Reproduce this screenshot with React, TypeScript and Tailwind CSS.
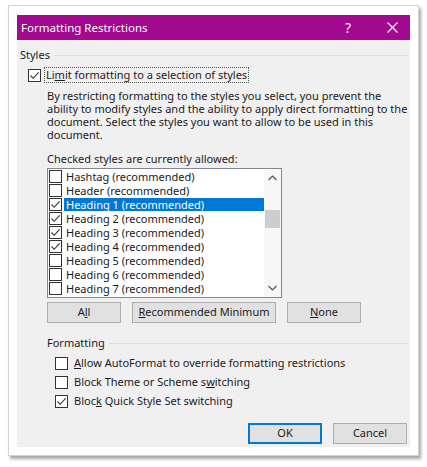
import React from "react";

const STYLES = [
  { name: "Hashtag (recommended)", checked: false },
  { name: "Header (recommended)", checked: false },
  { name: "Heading 1 (recommended)", checked: true, selected: true },
  { name: "Heading 2 (recommended)", checked: true },
  { name: "Heading 3 (recommended)", checked: true },
  { name: "Heading 4 (recommended)", checked: true },
  { name: "Heading 5 (recommended)", checked: false },
  { name: "Heading 6 (recommended)", checked: false },
  { name: "Heading 7 (recommended)", checked: false },
];

function Check({ checked, size = 13 }: { checked: boolean; size?: number }) {
  return (
    <span
      className="inline-flex shrink-0 items-center justify-center border border-[#333] bg-white"
      style={{ width: size, height: size }}
    >
      {checked && (
        <svg width={size - 2} height={size - 2} viewBox="0 0 11 11" fill="none">
          <path d="M1.5 5.5 L4.2 8.3 L9.6 2.4" stroke="#333" strokeWidth="1.1" />
        </svg>
      )}
    </span>
  );
}

function Btn({ children, primary, className = "" }: { children: React.ReactNode; primary?: boolean; className?: string }) {
  return (
    <button
      className={`flex h-[21px] items-center justify-center bg-[#e1e1e1] text-[#1b1b1b] ${
        primary ? "border-2 border-[#0078d7]" : "border border-[#adadad]"
      } ${className}`}
    >
      {children}
    </button>
  );
}

export default function App() {
  return (
    <div className="min-h-screen bg-white pt-[5px] pl-[8px] text-[11px] text-[#1b1b1b]" style={{ fontFamily: '"Noto Sans", "Open Sans", sans-serif' }}>
      <div className="w-[411px] border border-[#d2d2d2] bg-white px-[8px] pt-[9px] pb-[8px] shadow-[2px_3px_3px_rgba(0,0,0,0.35)]">
        {/* title bar */}
        <div className="flex h-[25px] items-center bg-[#a1098e] pl-[4px] text-white">
          <span className="text-[11.5px]">Formatting Restrictions</span>
          <span className="ml-auto mr-[36px] text-[14px] leading-none">?</span>
          <svg className="mr-[12px]" width="11" height="11" viewBox="0 0 11 11">
            <path d="M0.5 0.5 L10.5 10.5 M10.5 0.5 L0.5 10.5" stroke="white" strokeWidth="1.2" />
          </svg>
        </div>

        {/* body */}
        <div className="h-[407px] bg-[#f0f0f0] pr-[2px]">
          <div className="flex items-center pt-[8px] pl-[3px] leading-[14px]">
            <span>Styles</span>
            <span className="ml-[4px] h-px flex-1 bg-[#dcdcdc]" />
          </div>

          <div className="mt-[5px] flex items-center pl-[11px]">
            <Check checked />
            <span className="ml-[3px] border border-dotted border-[#555] px-[1px] leading-[14px]">
              Li<span className="underline">m</span>it formatting to a selection of styles
            </span>
          </div>

          <p className="mt-[6px] pl-[30px] leading-[13px]">
            By restricting formatting to the styles you select, you prevent the ability to modify styles and the ability to apply direct formatting to the document. Select the styles you want to allow to be used in this document.
          </p>

          <div className="mt-[11px] pl-[30px] leading-[13px]">Checked styles are currently allowed:</div>

          <div className="mt-[3px] ml-[30px] flex h-[130px] w-[235px] border border-[#828790] bg-white">
            <div className="flex-1">
              {STYLES.map((s) => (
                <div key={s.name} className="flex h-[14px] items-center pl-[1px]">
                  <Check checked={s.checked} size={13} />
                  <span
                    className={`ml-[2px] flex-1 pl-[2px] leading-[13px] ${
                      s.selected ? "bg-[#0078d7] text-white" : ""
                    }`}
                  >
                    {s.name}
                  </span>
                </div>
              ))}
            </div>
            <div className="flex w-[17px] flex-col items-center bg-[#f7f7f7]">
              <svg className="mt-[6px]" width="9" height="6" viewBox="0 0 9 6">
                <path d="M0.5 5 L4.5 1 L8.5 5" stroke="#555" strokeWidth="1.2" fill="none" />
              </svg>
              <div className="mt-[29px] h-[18px] w-[15px] bg-[#cdcdcd]" />
              <svg className="mt-auto mb-[6px]" width="9" height="6" viewBox="0 0 9 6">
                <path d="M0.5 1 L4.5 5 L8.5 1" stroke="#555" strokeWidth="1.2" fill="none" />
              </svg>
            </div>
          </div>

          <div className="mt-[4px] ml-[30px] flex gap-[11px]">
            <Btn className="w-[74px]">
              A<span className="underline">l</span>l
            </Btn>
            <Btn className="w-[144px]">
              <span className="underline">R</span>ecommended Minimum
            </Btn>
            <Btn className="w-[74px]">
              <span className="underline">N</span>one
            </Btn>
          </div>

          <div className="mt-[13px] flex items-center pl-[30px] leading-[14px]">
            <span>Formatting</span>
            <span className="ml-[4px] h-px flex-1 bg-[#dcdcdc]" />
          </div>

          <div className="mt-[4px] pl-[38px]">
            <div className="flex h-[19px] items-center">
              <Check checked={false} />
              <span className="ml-[6px]">
                <span className="underline">A</span>llow AutoFormat to override formatting restrictions
              </span>
            </div>
            <div className="flex h-[19px] items-center">
              <Check checked={false} />
              <span className="ml-[6px]">
                Block Theme or Scheme s<span className="underline">w</span>itching
              </span>
            </div>
            <div className="flex h-[19px] items-center">
              <Check checked />
              <span className="ml-[6px]">
                Bloc<span className="underline">k</span> Quick Style Set switching
              </span>
            </div>
          </div>

          <div className="mt-[12px] flex justify-end gap-[11px] pr-[1px]">
            <Btn primary className="w-[74px]">OK</Btn>
            <Btn className="w-[74px]">Cancel</Btn>
          </div>
        </div>
      </div>
    </div>
  );
}
